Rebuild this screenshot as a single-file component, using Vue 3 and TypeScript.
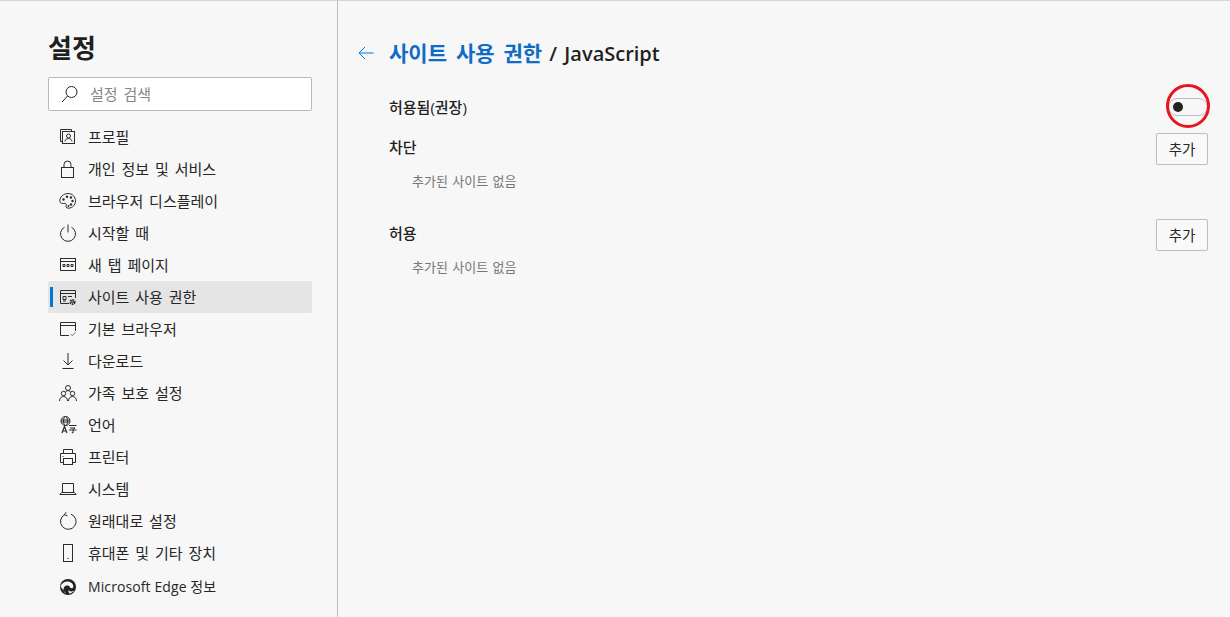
<script setup lang="ts">
const items: { id: string; label: string; active?: boolean }[] = [
  { id: 'profile', label: '프로필' },
  { id: 'lock', label: '개인 정보 및 서비스' },
  { id: 'palette', label: '브라우저 디스플레이' },
  { id: 'power', label: '시작할 때' },
  { id: 'newtab', label: '새 탭 페이지' },
  { id: 'site', label: '사이트 사용 권한', active: true },
  { id: 'browser', label: '기본 브라우저' },
  { id: 'download', label: '다운로드' },
  { id: 'family', label: '가족 보호 설정' },
  { id: 'lang', label: '언어' },
  { id: 'printer', label: '프린터' },
  { id: 'laptop', label: '시스템' },
  { id: 'reset', label: '원래대로 설정' },
  { id: 'phone', label: '휴대폰 및 기타 장치' },
  { id: 'edge', label: 'Microsoft Edge 정보' },
]
</script>

<template>
  <div class="page">
    <aside class="sidebar">
      <h1 class="title">설정</h1>
      <div class="search">
        <svg class="search-icon" width="18" height="18" viewBox="0 0 18 18" fill="none" stroke="#222" stroke-width="1">
          <circle cx="10.5" cy="7" r="5.5" />
          <path d="M6.6 11 1 17" />
        </svg>
        <span class="search-text">설정 검색</span>
      </div>
      <nav class="nav">
        <div v-for="item in items" :key="item.id" class="item" :class="{ active: item.active, edge: item.id === 'edge' }">
          <svg class="icon" width="18" height="18" viewBox="0 0 18 18" fill="none" stroke="#2b2b2b" stroke-width="1">
            <template v-if="item.id === 'profile'">
              <path d="M3.5 13.500H1.500V1.500H12.500V3.500" />
              <rect x="3.500" y="3.500" width="12" height="12" />
              <circle cx="9.500" cy="8" r="2" />
              <path d="M6 13.500c.3-2 1.700-3 3.500-3s3.200 1 3.500 3" />
            </template>
            <template v-else-if="item.id === 'lock'">
              <rect x="2.500" y="7.500" width="12" height="10" />
              <path d="M5 7.500V4.500a3.500 3.500 0 0 1 7 0v3" />
            </template>
            <template v-else-if="item.id === 'palette'">
              <path d="M9 1.500C4.500 1.500 .8 4.800 .8 8.800c0 1.800 1.300 2.700 2.800 2.700 1.700 0 3.300-.6 3.700.9.300 1.100-.6 1.400-.3 2.500.3.900 1.200 1.300 2.300 1.300 4.200 0 7.200-3.400 7.200-7.300 0-4-3-7.400-7.500-7.400z" />
              <g fill="#2b2b2b" stroke="none">
                <circle cx="4.500" cy="7.500" r="1.200" /><circle cx="8" cy="4.800" r="1.200" /><circle cx="12" cy="5.500" r="1.200" /><circle cx="13.500" cy="9" r="1.200" /><circle cx="12" cy="12.500" r="1.200" /><circle cx="9.500" cy="14" r="1" />
              </g>
            </template>
            <template v-else-if="item.id === 'power'">
              <path d="M5.500 3.200a7.500 7.500 0 1 0 7 0" />
              <path d="M9 .5v8" />
            </template>
            <template v-else-if="item.id === 'newtab'">
              <rect x="1.500" y="2.500" width="15" height="12" />
              <path d="M1.500 5.500h15" />
              <path d="M4 8.500h2v2H4zM8 8.500h2v2H8zM12 8.500h2v2h-2z" />
            </template>
            <template v-else-if="item.id === 'site'">
              <path d="M10 15.500H1.500v-13h15V10" />
              <path d="M1.500 5.500h15M4 8.500h3v3H4zM9 8.500h4M4 13h3" />
              <circle cx="13.500" cy="14" r="2.200" stroke-width="1.800" stroke-dasharray="1.500 .8" />
              <circle cx="13.500" cy="14" r="1" />
            </template>
            <template v-else-if="item.id === 'browser'">
              <path d="M10 15.500H1.500v-13h15V11" />
              <path d="M1.500 5.500h15" />
              <path d="M11.500 14l1.800 1.800 3.200-3.800" stroke="#777" />
            </template>
            <template v-else-if="item.id === 'download'">
              <path d="M9 1v12M4.500 8.500 9 13l4.500-4.500M3.500 16.500h11" />
            </template>
            <template v-else-if="item.id === 'family'">
              <circle cx="9" cy="4" r="2.500" />
              <circle cx="4.500" cy="9.500" r="2.200" />
              <circle cx="13.500" cy="9.500" r="2.200" />
              <path d="M.5 17c0-2.700 1.700-4.500 4-4.500s4 1.800 4 4.500M9.500 17c0-2.700 1.700-4.500 4-4.500s4 1.800 4 4.500M6.500 8c.6-1 1.400-1.300 2.500-1.300s1.900.3 2.500 1.300" />
            </template>
            <template v-else-if="item.id === 'lang'">
              <circle cx="6.500" cy="5" r="4.500" />
              <ellipse cx="6.500" cy="5" rx="2" ry="4.500" />
              <path d="M2 4h9M2 6h9" />
              <path d="M3 17 5.500 10.500 8 17M3.800 15h3.400" stroke-width="1.200" />
              <path d="M10 9.500h7.500M11 12h5l-2 1.500v3.500l-1.200-.5M10 14h7.500" stroke-width="1" />
            </template>
            <template v-else-if="item.id === 'printer'">
              <path d="M4.500 5.500v-4h9v4M4.500 14.500H1.500v-9h15v9h-3" />
              <rect x="4.500" y="10.500" width="9" height="6" />
              <path d="M3.500 8.500h1" />
            </template>
            <template v-else-if="item.id === 'laptop'">
              <path d="M3.500 12.500v-9h11v9" />
              <path d="M.8 14.500 2.500 12.500h13l1.700 2z" />
            </template>
            <template v-else-if="item.id === 'reset'">
              <path d="M12 2.200a7.800 7.800 0 1 1-6.300.4" />
              <path d="M7 .2 5.400 2.800l3 1" />
            </template>
            <template v-else-if="item.id === 'phone'">
              <rect x="4.500" y=".5" width="9" height="17" />
              <path d="M8.500 14.500h1.200" stroke-width="1.200" />
            </template>
            <template v-else>
              <circle cx="9" cy="9" r="8" fill="#222" stroke="none" />
              <path d="M1.500 8.500c1.200-3.500 4-5 7-5 3.500 0 5.800 2.500 5.800 5 0 1-.5 1.600-1.500 1.800-1 0-1.500-.4-1.800-1.200-.6-1.300-2-2-3.500-1.600-2.500.6-3.800 3.500-2.500 6.200.5 1 1.300 1.700 2 2" fill="#f7f7f7" stroke="none" />
              <path d="M9 12c.8 1.300 3.500 2 6.200.8-1 1.500-3 2.600-5 2.600" fill="#f7f7f7" stroke="none" />
            </template>
          </svg>
          <span class="label">{{ item.label }}</span>
        </div>
      </nav>
    </aside>

    <main class="content">
      <header class="head">
        <svg class="back" width="16" height="14" viewBox="0 0 16 14" fill="none" stroke="#0078d4" stroke-width="1">
          <path d="M15.500 7H1M7 1 1 7l6 6" />
        </svg>
        <h2 class="crumb"><span class="link">사이트 사용 권한</span> / JavaScript</h2>
      </header>

      <div class="row toggle-row">
        <span class="strong">허용됨(권장)</span>
        <span class="toggle-wrap">
          <span class="toggle"><span class="knob"></span></span>
          <span class="ring"></span>
        </span>
      </div>

      <section class="section">
        <div class="row">
          <span class="strong sec-label">차단</span>
          <button class="add" type="button">추가</button>
        </div>
        <p class="empty">추가된 사이트 없음</p>
      </section>

      <section class="section allow">
        <div class="row">
          <span class="strong sec-label">허용</span>
          <button class="add" type="button">추가</button>
        </div>
        <p class="empty">추가된 사이트 없음</p>
      </section>
    </main>
  </div>
</template>

<style>
html, body { margin: 0; background: #f7f7f7; overflow: hidden; }
</style>

<style scoped>
.page {
  display: flex;
  width: 1230px;
  height: 617px;
  box-sizing: border-box;
  border-top: 1px solid #d6d6d6;
  background: #f7f7f7;
  color: #1f1f1f;
  font-family: "Open Sans", "Noto Sans CJK KR", sans-serif;
  overflow: hidden;
}
.sidebar {
  width: 338px;
  flex: none;
  box-sizing: border-box;
  border-right: 1px solid #bdbdbd;
  padding: 0 25px 0 48px;
}
.title {
  margin: 29px 0 0;
  height: 36px;
  font-size: 26px;
  line-height: 36px;
  font-weight: 700;
  color: #1f1f1f;
}
.search {
  display: flex;
  align-items: center;
  box-sizing: border-box;
  height: 34px;
  margin-top: 11px;
  padding-left: 12px;
  background: #fff;
  border: 1px solid #b9b9b9;
  border-radius: 2px;
}
.search-text {
  margin-left: 11px;
  margin-bottom: 2px;
  font-size: 15px;
  word-spacing: 2px;
  color: #868686;
}
.nav {
  margin-top: 10px;
  display: flex;
  flex-direction: column;
}
.item {
  position: relative;
  display: flex;
  align-items: center;
  height: 32px;
  padding-left: 11px;
  border-radius: 2px;
  font-size: 15px;
  word-spacing: 2px;
  color: #262626;
}
.item.edge {
  font-size: 14px;
  word-spacing: 0;
  letter-spacing: 0.1px;
  padding-top: 2px;
}
.item.active {
  background: #e5e5e5;
}
.item.active::before {
  content: "";
  position: absolute;
  left: 2px;
  top: 6px;
  width: 3px;
  height: 20px;
  background: #0078d4;
}
.icon {
  flex: none;
}
.label {
  margin-left: 11px;
  margin-bottom: 2px;
  white-space: nowrap;
}
.content {
  flex: 1;
  padding: 0 22px 0 20px;
  min-width: 0;
}
.head {
  display: flex;
  align-items: center;
  height: 30px;
  margin-top: 37px;
}
.back {
  flex: none;
}
.crumb {
  margin: 0 0 0 15px;
  font-size: 20px;
  line-height: 30px;
  font-weight: 600;
  white-space: nowrap;
  word-spacing: 2px;
  color: #1f1f1f;
}
.link {
  font-size: 21px;
  word-spacing: 3.500px;
  color: #0f6cc4;
}
.row {
  display: flex;
  align-items: center;
  justify-content: space-between;
  padding-left: 31px;
}
.strong {
  font-size: 15px;
  font-weight: 500;
  color: #1f1f1f;
}
.toggle-row {
  margin-top: 16px;
  height: 49px;
  align-items: flex-start;
}
.toggle-row .strong {
  line-height: 28px;
  margin-top: 9px;
}
.toggle-wrap {
  position: relative;
  display: block;
  width: 40px;
  height: 18px;
  margin-top: 14px;
}
.toggle {
  display: block;
  box-sizing: border-box;
  width: 40px;
  height: 18px;
  border: 1px solid #bdbdbd;
  border-radius: 9px;
  position: relative;
}
.knob {
  position: absolute;
  left: 4px;
  top: 3px;
  width: 10px;
  height: 10px;
  border-radius: 50%;
  background: #222;
}
.ring {
  position: absolute;
  left: -2px;
  top: -14px;
  width: 44px;
  height: 44px;
  box-sizing: border-box;
  border: 3px solid #e8141e;
  border-radius: 50%;
}
.section .row {
  height: 32px;
  align-items: flex-start;
}
.allow {
  margin-top: 27px;
}
.sec-label {
  line-height: 28px;
}
.add {
  box-sizing: border-box;
  width: 52px;
  height: 32px;
  padding: 0 0 2px;
  background: #f9f9f9;
  border: 1px solid #bdbdbd;
  border-radius: 2px;
  font: inherit;
  font-size: 14.500px;
  color: #262626;
}
.empty {
  margin: 5px 0 0 54px;
  height: 22px;
  font-size: 13px;
  line-height: 22px;
  word-spacing: 1px;
  color: #767676;
}
</style>
